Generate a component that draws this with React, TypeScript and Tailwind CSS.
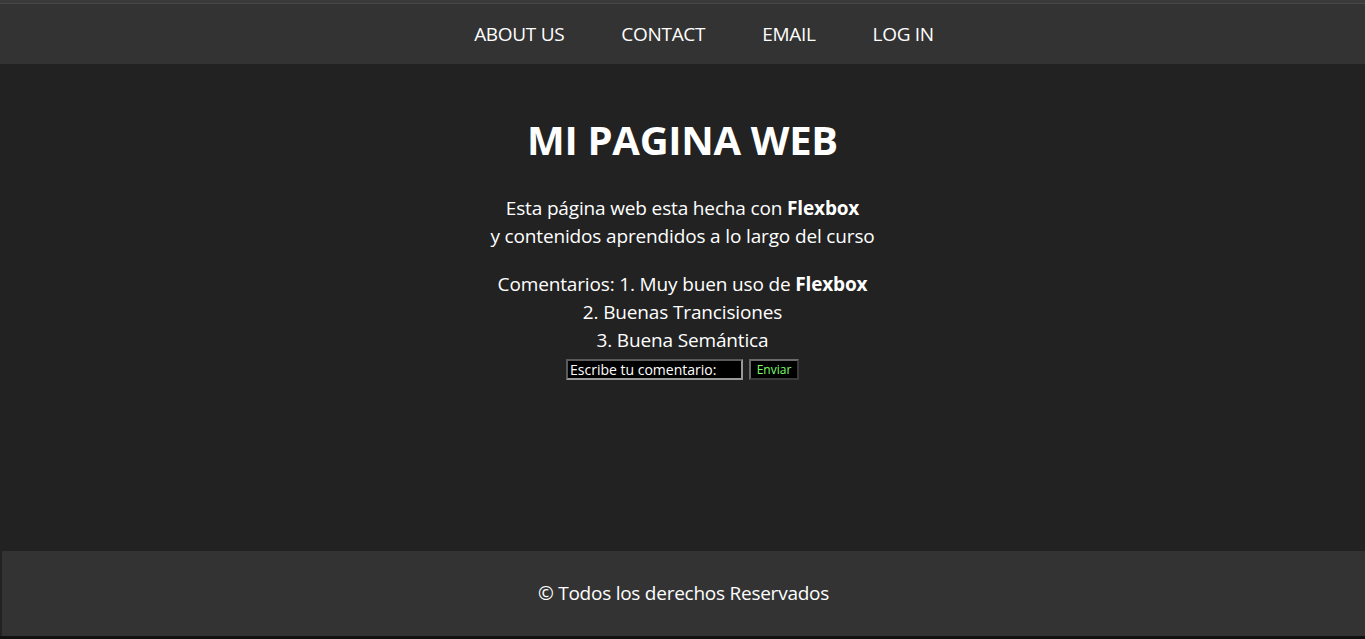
export default function App() {
  const links = ["ABOUT US", "CONTACT", "EMAIL", "LOG IN"];

  return (
    <div className="flex h-[639px] flex-col bg-[#222222] font-['Segoe_UI','Open_Sans',sans-serif] text-white">
      {/* Top nav */}
      <header className="h-[64px] shrink-0 border-t-[3px] border-[#3a3a3a] bg-[#333333]">
        <div className="h-px bg-[#474747]" />
        <ul className="flex h-[60px] items-center justify-center gap-[57px] pl-[43px]">
          {links.map((l) => (
            <li key={l} className="text-[19px] tracking-[-0.3px]">
              {l}
            </li>
          ))}
        </ul>
      </header>

      {/* Main */}
      <main className="flex flex-1 flex-col items-center pt-[52px] text-center">
        <h1 className="text-[40px] font-bold tracking-[-0.3px] leading-[48px]">MI PAGINA WEB</h1>
        <p className="mt-[30px] text-[19px] leading-[28px] tracking-[-0.15px]">
          Esta página web esta hecha con <b>Flexbox</b>
          <br />
          y contenidos aprendidos a lo largo del curso
        </p>
        <p className="mt-[20px] text-[19px] leading-[28px] tracking-[-0.15px]">
          Comentarios: 1. Muy buen uso de <b>Flexbox</b>
          <br />
          2. Buenas Trancisiones
          <br />
          3. Buena Semántica
        </p>
        <form className="mt-[5px] flex items-center gap-[6px]" onSubmit={(e) => e.preventDefault()}>
          <input
            type="text"
            placeholder="Escribe tu comentario:"
            className="h-[21px] w-[177px] border-2 border-t-[#5a5a5a] border-l-[#5a5a5a] border-r-[#9a9a9a] border-b-[#9a9a9a] bg-black px-[2px] text-[14px] text-white placeholder:text-white outline-none"
          />
          <button
            type="submit"
            className="h-[21px] w-[50px] border-2 border-t-[#6a6a6a] border-l-[#6a6a6a] border-r-[#3a3a3a] border-b-[#3a3a3a] bg-black text-[12px] text-[#7dff6a]"
          >
            Enviar
          </button>
        </form>
      </main>

      {/* Footer */}
      <footer className="ml-[2px] flex h-[85px] shrink-0 items-center justify-center bg-[#333333]">
        <span className="text-[19px] tracking-[-0.25px]">© Todos los derechos Reservados</span>
      </footer>
      <div className="h-[3px] shrink-0 bg-[#111111]" />
    </div>
  );
}
